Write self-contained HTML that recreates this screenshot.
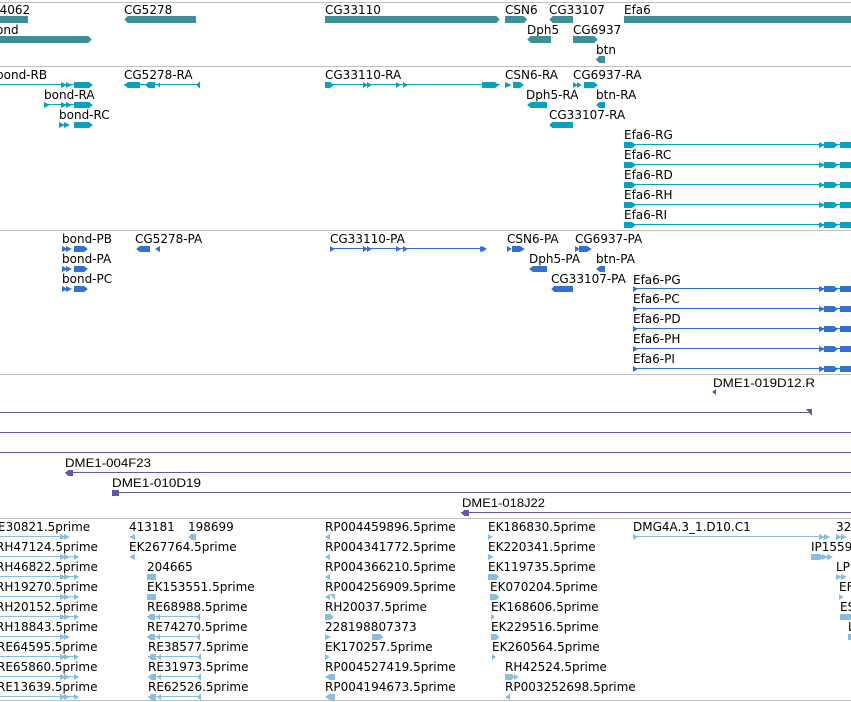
<!DOCTYPE html>
<html><head><meta charset="utf-8"><style>
html,body{margin:0;padding:0;background:#fff;width:851px;height:702px;overflow:hidden}
svg{display:block}
text{font-family:"DejaVu Sans","Liberation Sans",sans-serif;font-size:12px;fill:#000}
.p text{font-family:"Liberation Sans Narrow","Liberation Sans",sans-serif;font-size:12px}
</style></head><body>
<svg width="851" height="702" viewBox="0 0 851 702" xmlns="http://www.w3.org/2000/svg" shape-rendering="crispEdges">
<g fill="none" stroke="#c0c0c0" stroke-width="1">
<line x1="0" y1="2.5" x2="851" y2="2.5"/><line x1="0" y1="66.5" x2="851" y2="66.5"/>
<line x1="0" y1="230.5" x2="851" y2="230.5"/><line x1="0" y1="374.5" x2="851" y2="374.5"/>
<line x1="0" y1="518.5" x2="851" y2="518.5"/><line x1="0" y1="700.5" x2="851" y2="700.5"/>
</g>
<g fill="#3f9096">
<text x="-8" y="14">44062</text><rect x="0" y="16" width="28" height="7"/>
<text x="-4" y="34">ond</text><polygon points="0,36 88,36 92,39.5 88,43 0,43"/>
<text x="124" y="14">CG5278</text><polygon points="128,16 196,16 196,23 128,23 124,19.5"/>
<text x="325" y="14">CG33110</text><polygon points="325,16 496,16 500,19.5 496,23 325,23"/>
<text x="505" y="14">CSN6</text><polygon points="505,16 524,16 527,19.5 524,23 505,23"/>
<text x="549" y="14">CG33107</text><polygon points="553,16 573,16 573,23 553,23 549,19.5"/>
<text x="624" y="14">Efa6</text><rect x="624" y="16" width="227" height="7"/>
<text x="527" y="34">Dph5</text><polygon points="531,36 551,36 551,43 531,43 527,39.5"/>
<text x="573" y="34">CG6937</text><polygon points="573,36 594,36 598,39.5 594,43 573,43"/>
<text x="596" y="54">btn</text><polygon points="599,56 605,56 605,63 599,63 596,59.5"/>
</g>
<g fill="#0aa0c0" stroke="none">
<text x="-4" y="79">bond-RB</text><rect x="0" y="84" width="92" height="1"/><polygon points="61,82 67,85 61,88"/><polygon points="66,82 72,85 66,88"/><polygon points="74,82 89,82 93,85 89,88 74,88"/>
<text x="124" y="79">CG5278-RA</text><rect x="124" y="84" width="76" height="1"/><polygon points="128,82 140,82 140,88 128,88 124,85"/><polygon points="148,82 155,82 155,88 148,88 145,85"/><polygon points="160,82 157,85 160,88"/><polygon points="200,81 196,85 200,89"/>
<text x="325" y="79">CG33110-RA</text><rect x="325" y="84" width="175" height="1"/><polygon points="325,82 330,82 334,85 330,88 325,88"/><polygon points="363,82 368,85 363,88"/><polygon points="367,82 372,85 367,88"/><polygon points="396,82 401,85 396,88"/><polygon points="403,82 408,85 403,88"/><polygon points="482,82 495,82 499,85 495,88 482,88"/>
<text x="505" y="79">CSN6-RA</text><polygon points="505,82 512,85 505,88"/><polygon points="513,82 520,82 524,85 520,88 513,88"/>
<text x="573" y="79">CG6937-RA</text><polygon points="573,82 578,85 573,88"/><polygon points="577,82 582,85 577,88"/><polygon points="584,82 594,82 598,85 594,88 584,88"/>
<text x="44" y="99">bond-RA</text><rect x="44" y="104" width="48" height="1"/><polygon points="44,102 50,105 44,108"/><polygon points="61,102 67,105 61,108"/><polygon points="66,102 72,105 66,108"/><polygon points="74,102 89,102 93,105 89,108 74,108"/>
<text x="526" y="99">Dph5-RA</text><polygon points="531,102 546,102 547,108 531,108 527,105"/><polygon points="547,102 547,108 543,105"/>
<text x="596" y="99">btn-RA</text><polygon points="599,102 605,102 605,108 599,108 596,105"/>
<text x="59" y="119">bond-RC</text><polygon points="59,122 65,125 59,128"/><polygon points="64,122 70,125 64,128"/><polygon points="74,122 89,122 93,125 89,128 74,128"/>
<text x="549" y="119">CG33107-RA</text><polygon points="552,122 573,122 573,128 552,128 549,125"/>
<g id="efa">
<rect x="624" y="144" width="227" height="1"/><polygon points="624,142 632,142 636,145 632,148 624,148"/><polygon points="819,142 825,145 819,148"/><polygon points="824,142 834,142 838,145 834,148 824,148"/><rect x="840" y="142" width="11" height="6"/>
</g>
<use href="#efa" y="20"/><use href="#efa" y="40"/><use href="#efa" y="60"/><use href="#efa" y="80"/>
</g>
<g fill="#000"><text x="624" y="139">Efa6-RG</text><text x="624" y="159">Efa6-RC</text><text x="624" y="179">Efa6-RD</text><text x="624" y="199">Efa6-RH</text><text x="624" y="219">Efa6-RI</text></g>
<g fill="#3470d0">
<polygon points="480,246 486,249 480,252"/>
<text x="62" y="243">bond-PB</text><polygon points="62,246 68,249 62,252"/><polygon points="66,246 72,249 66,252"/><polygon points="74,246 84,246 88,249 84,252 74,252"/>
<text x="135" y="243">CG5278-PA</text><polygon points="140,246 150,246 150,252 140,252 136,249"/><polygon points="160,246 155,249 160,252"/>
<text x="330" y="243">CG33110-PA</text><rect x="330" y="248" width="156" height="1"/><polygon points="330,246 335,249 330,252"/><polygon points="363,246 368,249 363,252"/><polygon points="367,246 372,249 367,252"/><polygon points="396,246 401,249 396,252"/><polygon points="403,246 408,249 403,252"/><polygon points="482,246 487,249 482,252"/>
<text x="507" y="243">CSN6-PA</text><polygon points="507,246 512,249 507,252"/><polygon points="512,246 520,246 525,249 520,252 512,252"/>
<text x="575" y="243">CG6937-PA</text><polygon points="575,246 580,249 575,252"/><polygon points="579,246 587,246 592,249 587,252 579,252"/>
<text x="62" y="263">bond-PA</text><polygon points="62,266 68,269 62,272"/><polygon points="66,266 72,269 66,272"/><polygon points="74,266 84,266 88,269 84,272 74,272"/>
<text x="529" y="263">Dph5-PA</text><polygon points="533,266 547,266 547,272 533,272 529,269"/>
<text x="596" y="263">btn-PA</text><polygon points="600,266 605,266 605,272 600,272 596,269"/>
<text x="62" y="283">bond-PC</text><polygon points="62,286 68,289 62,292"/><polygon points="66,286 72,289 66,292"/><polygon points="74,286 84,286 88,289 84,292 74,292"/>
<text x="551" y="283">CG33107-PA</text><polygon points="554,286 573,286 573,292 554,292 551,289"/>
<g id="efp"><rect x="633" y="288" width="218" height="1"/><polygon points="633,286 638,289 633,292"/><polygon points="819,286 825,289 819,292"/><polygon points="824,286 834,286 838,289 834,292 824,292"/><rect x="840" y="286" width="11" height="6"/></g>
<use href="#efp" y="20"/><use href="#efp" y="40"/><use href="#efp" y="60"/><use href="#efp" y="80"/>
</g>
<g fill="#000"><text x="633" y="284">Efa6-PG</text><text x="633" y="303">Efa6-PC</text><text x="633" y="323">Efa6-PD</text><text x="633" y="343">Efa6-PH</text><text x="633" y="363">Efa6-PI</text></g>
<g class="p" fill="#6a55a8">
<polygon points="716,389 716,395 712,392"/>
<rect x="0" y="412" width="812" height="1"/><polygon points="806,409 812,409 812,416"/>
<rect x="0" y="432" width="851" height="1"/><rect x="0" y="452" width="851" height="1"/>
<rect x="65" y="472" width="786" height="1"/><polygon points="68,470 73,470 73,476 68,476 65,473"/>
<rect x="112" y="492" width="739" height="1"/><rect x="112" y="490" width="7" height="6"/>
<rect x="461" y="512" width="390" height="1"/><polygon points="464,510 469,510 469,516 464,516 461,513"/>
</g>
<g class="p" fill="#000">
<text x="713" y="387" textLength="102" lengthAdjust="spacingAndGlyphs">DME1-019D12.R</text>
<text x="65" y="467" textLength="86" lengthAdjust="spacingAndGlyphs">DME1-004F23</text>
<text x="112" y="487" textLength="89" lengthAdjust="spacingAndGlyphs">DME1-010D19</text>
<text x="462" y="507" textLength="83" lengthAdjust="spacingAndGlyphs">DME1-018J22</text>
</g>
<g fill="#000">
<text x="-2" y="531">E30821.5prime</text><text x="-4" y="551">RH47124.5prime</text><text x="-4" y="571">RH46822.5prime</text><text x="-4" y="591">RH19270.5prime</text><text x="-4" y="611">RH20152.5prime</text><text x="-4" y="631">RH18843.5prime</text><text x="-3" y="651">RE64595.5prime</text><text x="-3" y="671">RE65860.5prime</text><text x="-3" y="691">RE13639.5prime</text>
<text x="129" y="531">413181</text><text x="188" y="531">198699</text><text x="129" y="551">EK267764.5prime</text><text x="147" y="571">204665</text><text x="147" y="591">EK153551.5prime</text><text x="147" y="611">RE68988.5prime</text><text x="147" y="631">RE74270.5prime</text><text x="148" y="651">RE38577.5prime</text><text x="148" y="671">RE31973.5prime</text><text x="148" y="691">RE62526.5prime</text>
<text x="325" y="531">RP004459896.5prime</text><text x="325" y="551">RP004341772.5prime</text><text x="325" y="571">RP004366210.5prime</text><text x="325" y="591">RP004256909.5prime</text><text x="325" y="611">RH20037.5prime</text><text x="325" y="631">228198807373</text><text x="325" y="651">EK170257.5prime</text><text x="325" y="671">RP004527419.5prime</text><text x="325" y="691">RP004194673.5prime</text>
<text x="488" y="531">EK186830.5prime</text><text x="488" y="551">EK220341.5prime</text><text x="488" y="571">EK119735.5prime</text><text x="490" y="591">EK070204.5prime</text><text x="491" y="611">EK168606.5prime</text><text x="491" y="631">EK229516.5prime</text><text x="492" y="651">EK260564.5prime</text><text x="505" y="671">RH42524.5prime</text><text x="505" y="691">RP003252698.5prime</text>
<text x="633" y="531">DMG4A.3_1.D10.C1</text><text x="836" y="531">32</text><text x="811" y="551">IP1559</text><text x="836" y="571">LP</text><text x="839" y="591">EF</text><text x="840" y="611">ES</text><text x="848" y="631">L</text>
</g>
<g fill="#88bde0">
<g id="c0"><rect x="0" y="536" width="68" height="1"/><polygon points="60,534 66,537 60,540"/><polygon points="64,534 70,537 64,540"/></g>
<rect x="0" y="556" width="78" height="1"/><polygon points="60,554 66,557 60,560"/><polygon points="64,554 70,557 64,560"/><polygon points="74,554 79,557 74,560"/>
<rect x="0" y="576" width="78" height="1"/><polygon points="60,574 66,577 60,580"/><polygon points="64,574 70,577 64,580"/><polygon points="74,574 79,577 74,580"/>
<rect x="0" y="596" width="78" height="1"/><polygon points="60,594 66,597 60,600"/><polygon points="64,594 70,597 64,600"/><polygon points="74,594 79,597 74,600"/>
<rect x="0" y="616" width="78" height="1"/><polygon points="60,614 66,617 60,620"/><polygon points="64,614 70,617 64,620"/><polygon points="74,614 79,617 74,620"/>
<use href="#c0" y="100"/>
<rect x="0" y="656" width="78" height="1"/><polygon points="60,654 66,657 60,660"/><polygon points="64,654 70,657 64,660"/><polygon points="74,654 79,657 74,660"/>
<rect x="0" y="676" width="78" height="1"/><polygon points="60,674 66,677 60,680"/><polygon points="64,674 70,677 64,680"/><polygon points="74,674 79,677 74,680"/>
<rect x="0" y="696" width="78" height="1"/><polygon points="60,694 66,697 60,700"/><polygon points="64,694 70,697 64,700"/><polygon points="74,694 79,697 74,700"/>
<polygon points="135,534 135,540 129,537"/><polygon points="191,534 196,534 196,540 191,540 188,537"/><polygon points="135,554 135,560 129,557"/>
<rect x="147" y="574" width="9" height="6"/><rect x="147" y="594" width="9" height="6"/>
<g id="re"><rect x="147" y="616" width="53" height="1"/><polygon points="150,614 155,614 155,620 150,620 147,617"/><polygon points="160,614 160,620 156,617"/><polygon points="200,613 196,617 200,621"/></g>
<use href="#re" y="20"/><use href="#re" y="40" x="1"/><use href="#re" y="60" x="1"/><use href="#re" y="80" x="1"/>
<polygon points="330,534 330,540 325,537"/><polygon points="330,554 330,560 325,557"/><polygon points="330,574 330,580 325,577"/><polygon points="330,594 330,600 325,597 330,594 335,594 335,600"/><polygon points="325,614 330,614 334,617 330,620 325,620"/><polygon points="325,634 331,637 325,640"/><polygon points="372,634 380,634 383,637 380,640 372,640"/><polygon points="325,654 330,657 325,660"/><polygon points="330,674 335,674 335,680 330,680 325,677"/><polygon points="330,694 335,694 335,700 330,700 325,697"/>
<polygon points="488,534 493,537 488,540"/><polygon points="488,554 494,557 488,560"/><polygon points="488,574 496,574 499,577 496,580 488,580"/><polygon points="490,594 496,594 499,597 496,600 490,600"/><polygon points="491,614 495,617 491,620"/><polygon points="491,634 496,634 499,637 496,640 491,640"/><polygon points="492,654 496,657 492,660"/><polygon points="505,674 512,674 514,677 512,680 505,680"/><polygon points="514,674 519,677 514,680"/><polygon points="510,694 510,700 505,697"/>
<rect x="633" y="536" width="190" height="1"/><polygon points="633,534 638,537 633,540"/><polygon points="819,534 825,537 819,540"/><polygon points="824,534 830,537 824,540"/><polygon points="836,534 842,537 836,540"/><polygon points="841,534 847,537 841,540"/>
<polygon points="811,554 820,554 823,557 820,560 811,560"/><polygon points="822,554 828,557 822,560"/><polygon points="827,554 833,557 827,560"/>
<polygon points="836,574 842,577 836,580"/><polygon points="841,574 847,577 841,580"/>
<polygon points="839,594 844,597 839,600"/><rect x="840" y="614" width="11" height="6"/><rect x="848" y="634" width="3" height="6"/>
</g>
</svg>
</body></html>
